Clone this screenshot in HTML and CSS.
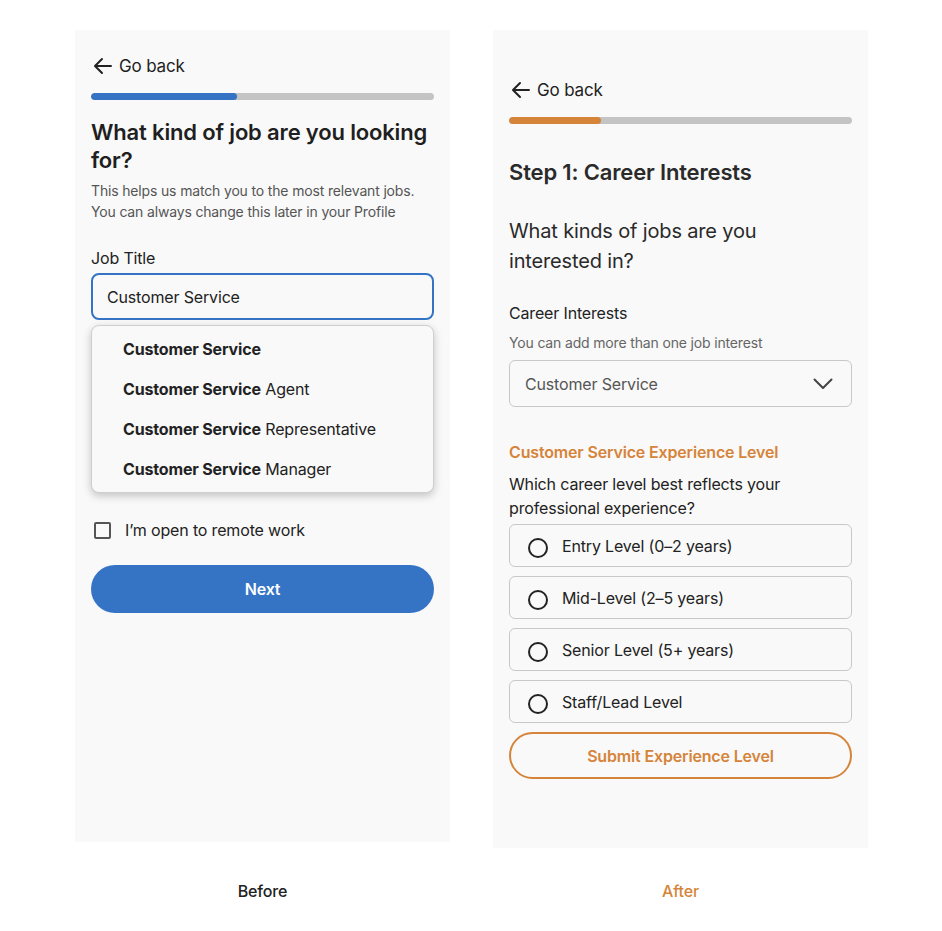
FILE: index.html
```html
<!DOCTYPE html>
<html lang="en">
<head>
<meta charset="utf-8">
<title>Before / After</title>
<link rel="stylesheet" href="styles.css">
</head>
<body>
<div class="compare">
  <section class="panel panel-before">
    <a class="back" href="#">
      <svg class="back-icon" viewBox="0 0 24 24" width="24" height="24"><path d="M20 12H4.5M11 5l-7 7 7 7" fill="none" stroke="#222" stroke-width="2" stroke-linecap="round" stroke-linejoin="round"/></svg>
      <span>Go back</span>
    </a>
    <div class="progress"><div class="progress-fill fill-blue" style="width:42.5%"></div></div>
    <h1 class="title">What kind of job are you looking for?</h1>
    <p class="sub">This helps us match you to the most relevant jobs. You can always change this later in your Profile</p>
    <label class="label label-job">Job Title</label>
    <div class="input input-focus">Customer Service</div>
    <ul class="menu">
      <li><b>Customer Service</b></li>
      <li><b>Customer Service</b> Agent</li>
      <li><b>Customer Service</b> Representative</li>
      <li><b>Customer Service</b> Manager</li>
    </ul>
    <div class="check-row">
      <span class="checkbox"></span>
      <span>I’m open to remote work</span>
    </div>
    <button class="btn btn-primary">Next</button>
  </section>

  <section class="panel panel-after">
    <a class="back" href="#">
      <svg class="back-icon" viewBox="0 0 24 24" width="24" height="24"><path d="M20 12H4.5M11 5l-7 7 7 7" fill="none" stroke="#222" stroke-width="2" stroke-linecap="round" stroke-linejoin="round"/></svg>
      <span>Go back</span>
    </a>
    <div class="progress"><div class="progress-fill fill-orange" style="width:26.8%"></div></div>
    <h1 class="step">Step 1: Career Interests</h1>
    <p class="question">What kinds of jobs are you interested in?</p>
    <label class="label label-career">Career Interests</label>
    <p class="hint">You can add more than one job interest</p>
    <div class="select">
      <span>Customer Service</span>
      <svg class="chev" viewBox="0 0 20 12" width="20" height="12"><path d="M1.5 1.5l8.5 8.5 8.5-8.5" fill="none" stroke="#444" stroke-width="2" stroke-linecap="round" stroke-linejoin="round"/></svg>
    </div>
    <h2 class="exp-title">Customer Service Experience Level</h2>
    <p class="exp-q">Which career level best reflects your professional experience?</p>
    <div class="options">
      <div class="option"><span class="radio"></span><span>Entry Level (0–2 years)</span></div>
      <div class="option"><span class="radio"></span><span>Mid-Level (2–5 years)</span></div>
      <div class="option"><span class="radio"></span><span>Senior Level (5+ years)</span></div>
      <div class="option"><span class="radio"></span><span>Staff/Lead Level</span></div>
    </div>
    <button class="btn btn-outline">Submit Experience Level</button>
  </section>

  <div class="caption caption-before">Before</div>
  <div class="caption caption-after">After</div>
</div>
</body>
</html>
```

FILE: styles.css
```css
* { box-sizing: border-box; }
html, body { margin: 0; padding: 0; background: #ffffff; }
body {
  font-family: Inter, "Noto Sans", "Liberation Sans", sans-serif;
  color: #222222;
  letter-spacing: -0.01em;
}
.compare {
  display: grid;
  grid-template-columns: 375px 375px;
  grid-template-rows: 818px auto;
  column-gap: 43px;
  padding: 30px 0 0 75px;
  align-items: start;
}
.panel {
  background: #f9f9f9;
  padding: 0 16px;
  display: flex;
  flex-direction: column;
}
.panel-before { height: 812px; padding-top: 24px; }
.panel-after { height: 818px; padding-top: 48px; }

.back {
  display: flex;
  align-items: center;
  gap: 4px;
  height: 24px;
  color: #222;
  text-decoration: none;
  font-size: 17px;
}
.back-icon { display: block; }

.progress {
  margin-top: 15px;
  height: 7px;
  border-radius: 4px;
  background: #c4c4c4;
  overflow: hidden;
}
.progress-fill { height: 100%; border-radius: 4px; }
.fill-blue { background: #3574c4; }
.fill-orange { background: #d5843a; }

.title {
  margin: 18px 0 0;
  font-size: 22px;
  line-height: 28px;
  font-weight: 600;
  color: #1f1f1f;
}
.sub {
  margin: 6px 0 0;
  font-size: 14px;
  line-height: 21px;
  color: #555;
}
.label {
  display: block;
  font-size: 16px;
  line-height: 24px;
  color: #222;
}
.label-job { margin-top: 24px; }
.input {
  margin-top: 3px;
  height: 47px;
  border: 2px solid #3574c4;
  border-radius: 8px;
  padding: 0 14px;
  display: flex;
  align-items: center;
  font-size: 16px;
  color: #222;
  background: #f9f9f9;
}
.menu {
  list-style: none;
  margin: 5px 0 0;
  padding: 3px 0;
  border: 1px solid #cfcfcf;
  border-radius: 8px;
  background: #f9f9f9;
  box-shadow: 0 3px 8px rgba(0,0,0,0.22);
}
.menu li {
  height: 40px;
  display: flex;
  align-items: center;
  padding-left: 31px;
  font-size: 16px;
  color: #222;
}
.menu b { font-weight: 700; margin-right: 0.28em; }

.check-row {
  margin-top: 25px;
  height: 24px;
  display: flex;
  align-items: center;
  gap: 14px;
  padding-left: 3px;
  font-size: 16px;
  color: #222;
}
.checkbox {
  width: 17px;
  height: 17px;
  border: 2px solid #555;
  border-radius: 2px;
  flex: none;
}

.btn {
  font-family: inherit;
  letter-spacing: inherit;
  width: 100%;
  border-radius: 999px;
  font-size: 16px;
  font-weight: 600;
  cursor: pointer;
}
.btn-primary {
  margin-top: 23px;
  height: 48px;
  border: none;
  background: #3574c4;
  color: #ffffff;
}
.btn-outline {
  margin-top: 9px;
  height: 47px;
  border: 2px solid #d5843a;
  background: transparent;
  color: #d5843a;
}

.step {
  margin: 34px 0 0;
  font-size: 22px;
  line-height: 28px;
  font-weight: 600;
  color: #2a2a2a;
}
.question {
  margin: 30px 0 0;
  font-size: 20px;
  line-height: 30px;
  color: #2a2a2a;
  padding-right: 90px;
}
.label-career { margin-top: 25px; }
.hint {
  margin: 8px 0 0;
  font-size: 14px;
  line-height: 20px;
  color: #666;
}
.select {
  margin-top: 7px;
  height: 47px;
  border: 1px solid #c8c8c8;
  border-radius: 6px;
  padding: 0 18px 0 15px;
  display: flex;
  align-items: center;
  justify-content: space-between;
  font-size: 16px;
  color: #555;
}
.chev { display: block; }
.exp-title {
  margin: 33px 0 0;
  font-size: 16px;
  line-height: 24px;
  font-weight: 600;
  color: #d5843a;
}
.exp-q {
  margin: 8px 0 0;
  font-size: 16px;
  line-height: 24px;
  color: #222;
  padding-right: 60px;
}
.options {
  margin-top: 4px;
  display: flex;
  flex-direction: column;
  gap: 9px;
}
.option {
  height: 43px;
  border: 1px solid #c8c8c8;
  border-radius: 6px;
  display: flex;
  align-items: center;
  gap: 14px;
  padding-left: 18px;
  font-size: 16px;
  color: #222;
}
.radio {
  width: 20px;
  height: 20px;
  border: 2px solid #222;
  border-radius: 50%;
  flex: none;
  margin-top: 5px;
}

.caption {
  margin-top: 31px;
  text-align: center;
  font-size: 16px;
  line-height: 24px;
  font-weight: 500;
}
.caption-before { color: #222; }
.caption-after { color: #d5843a; }
```
